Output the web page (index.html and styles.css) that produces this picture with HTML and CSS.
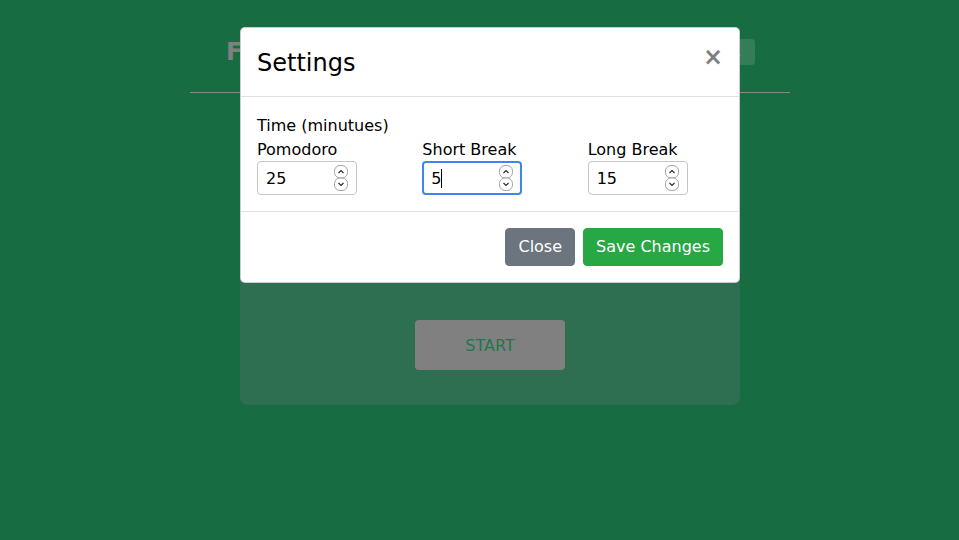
FILE: index.html
```html
<!DOCTYPE html>
<html lang="en">
<head>
<meta charset="utf-8">
<title>Pomodoro</title>
<link rel="stylesheet" href="styles.css">
</head>
<body>
<div class="page">
  <header class="top">
    <h1 class="brand">Focus Timer</h1>
    <button class="settings-btn" type="button">Settings</button>
  </header>
  <main class="card">
    <div class="card-spacer"></div>
    <button class="start" type="button">START</button>
  </main>

  <div class="overlay">
    <div class="modal">
      <div class="modal-header">
        <h4 class="modal-title">Settings</h4>
        <button class="close" type="button" aria-label="Close">&times;</button>
      </div>
      <div class="modal-body">
        <div class="section-label">Time (minutues)</div>
        <div class="fields">
          <label class="field">
            <span class="field-label">Pomodoro</span>
            <span class="num-wrap">
              <input class="num" type="number" value="25">
              <svg class="spin" width="14" height="26" viewBox="0 0 14 26" aria-hidden="true">
                <rect x="0.5" y="0.5" width="13" height="12.5" rx="5.5" fill="#fff" stroke="#a8a49f"/>
                <rect x="0.5" y="13" width="13" height="12.5" rx="5.5" fill="#fff" stroke="#a8a49f"/>
                <path d="M4.5 8 L7 5.5 L9.5 8" fill="none" stroke="#2b2b2b" stroke-width="1.2"/>
                <path d="M4.5 18 L7 20.5 L9.5 18" fill="none" stroke="#2b2b2b" stroke-width="1.2"/>
              </svg>
            </span>
          </label>
          <label class="field">
            <span class="field-label">Short Break</span>
            <span class="num-wrap">
              <input class="num focused" type="number" value="5">
              <span class="caret"></span>
              <svg class="spin" width="14" height="26" viewBox="0 0 14 26" aria-hidden="true">
                <rect x="0.5" y="0.5" width="13" height="12.5" rx="5.5" fill="#fff" stroke="#a8a49f"/>
                <rect x="0.5" y="13" width="13" height="12.5" rx="5.5" fill="#fff" stroke="#a8a49f"/>
                <path d="M4.5 8 L7 5.5 L9.5 8" fill="none" stroke="#2b2b2b" stroke-width="1.2"/>
                <path d="M4.5 18 L7 20.5 L9.5 18" fill="none" stroke="#2b2b2b" stroke-width="1.2"/>
              </svg>
            </span>
          </label>
          <label class="field">
            <span class="field-label">Long Break</span>
            <span class="num-wrap">
              <input class="num" type="number" value="15">
              <svg class="spin" width="14" height="26" viewBox="0 0 14 26" aria-hidden="true">
                <rect x="0.5" y="0.5" width="13" height="12.5" rx="5.5" fill="#fff" stroke="#a8a49f"/>
                <rect x="0.5" y="13" width="13" height="12.5" rx="5.5" fill="#fff" stroke="#a8a49f"/>
                <path d="M4.5 8 L7 5.5 L9.5 8" fill="none" stroke="#2b2b2b" stroke-width="1.2"/>
                <path d="M4.5 18 L7 20.5 L9.5 18" fill="none" stroke="#2b2b2b" stroke-width="1.2"/>
              </svg>
            </span>
          </label>
        </div>
      </div>
      <div class="modal-footer">
        <button class="btn btn-secondary" type="button">Close</button>
        <button class="btn btn-success" type="button">Save Changes</button>
      </div>
    </div>
  </div>
</div>
</body>
</html>
```

FILE: styles.css
```css
html, body {
  margin: 0;
  padding: 0;
  height: 100%;
  overflow: hidden;
}
body {
  background: #176d41;
  font-family: "DejaVu Sans", sans-serif;
  font-size: 16px;
  line-height: 1.5;
  color: #212529;
}
.page {
  position: relative;
  width: 980px;
  height: 540px;
}
.top {
  width: 600px;
  margin: 0 auto;
  box-sizing: border-box;
  padding: 34px 35px 22px 36px;
  display: flex;
  align-items: center;
  justify-content: space-between;
  border-bottom: 1px solid #888888;
}
.brand {
  margin: 0;
  font-size: 24px;
  line-height: 36px;
  font-weight: 700;
  color: #808080;
}
.settings-btn {
  height: 26px;
  border: none;
  border-radius: 4px;
  background: rgba(255, 255, 255, 0.12);
  color: rgba(255, 255, 255, 0.35);
  font-family: inherit;
  font-size: 13px;
  padding: 0 14px;
}
.card {
  width: 500px;
  margin: 28px auto 0;
  background: #2e6f51;
  border-radius: 8px;
  padding: 0 0 35px;
  display: flex;
  flex-direction: column;
  align-items: center;
}
.card-spacer {
  height: 199px;
}
.start {
  width: 150px;
  height: 50px;
  border: none;
  border-radius: 4px;
  background: #808080;
  color: #1c7a4c;
  font-family: inherit;
  font-size: 16px;
}

.overlay {
  position: absolute;
  top: 0;
  left: 0;
  right: 0;
  bottom: 0;
}
.modal {
  width: 500px;
  box-sizing: border-box;
  margin: 27px auto 0;
  background: #fff;
  border: 1px solid rgba(0, 0, 0, 0.2);
  border-radius: 5px;
}
.modal-header {
  display: flex;
  align-items: flex-start;
  padding: 17px 16px 15px;
  border-bottom: 1px solid #dee2e6;
}
.modal-title {
  margin: 0;
  font-size: 24px;
  line-height: 36px;
  font-weight: 400;
  color: #000;
}
.close {
  margin: -17px -16px -15px auto;
  padding: 17px 16px 15px;
  background: transparent;
  border: 0;
  font-family: inherit;
  font-size: 24px;
  line-height: 1;
  font-weight: 700;
  color: #000;
  opacity: 0.5;
}
.modal-body {
  padding: 17px 16px 16px;
}
.section-label {
  line-height: 24px;
  color: #000;
}
.fields {
  display: grid;
  grid-template-columns: repeat(3, 1fr);
  column-gap: 30px;
}
.field {
  display: flex;
  flex-direction: column;
  align-items: flex-start;
}
.field-label {
  line-height: 24px;
  margin-bottom: -1px;
  color: #000;
}
.num-wrap {
  position: relative;
  display: inline-block;
  height: 34px;
}
.num {
  display: block;
  width: 100px;
  height: 34px;
  box-sizing: border-box;
  padding: 6px 8px;
  border: 1px solid #c8c4c0;
  border-radius: 4px;
  font-family: inherit;
  font-size: 16px;
  line-height: 20px;
  color: #000;
  background: #fff;
  -moz-appearance: textfield;
}
.num::-webkit-inner-spin-button,
.num::-webkit-outer-spin-button {
  -webkit-appearance: none;
  margin: 0;
}
.num.focused {
  border: 2px solid #3d87e6;
  padding: 5px 7px;
}
.num:focus {
  outline: none;
}
.spin {
  position: absolute;
  right: 9px;
  top: 4px;
}
.caret {
  position: absolute;
  left: 19px;
  top: 8px;
  width: 1px;
  height: 19px;
  background: #000;
}
.modal-footer {
  display: flex;
  justify-content: flex-end;
  align-items: center;
  padding: 12px;
  border-top: 1px solid #dee2e6;
}
.btn {
  margin: 4px;
  padding: 6px 12px;
  border: 1px solid transparent;
  border-radius: 4px;
  font-family: inherit;
  font-size: 16px;
  line-height: 24px;
  color: #fff;
}
.btn-secondary {
  background: #6c757d;
  border-color: #6c757d;
}
.btn-success {
  background: #28a745;
  border-color: #28a745;
}
```
